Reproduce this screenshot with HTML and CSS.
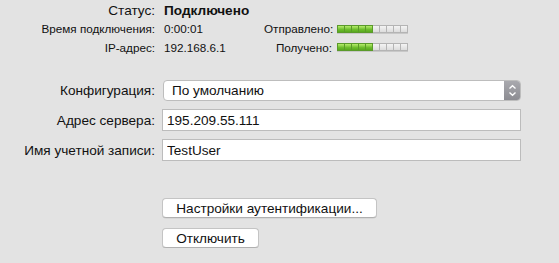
FILE: index.html
```html
<!DOCTYPE html>
<html lang="ru">
<head>
    <meta charset="UTF-8">
    <title>VPN</title>
    <link rel="stylesheet" href="styles.css">
</head>
<body>
    <div class="panel">
        <!-- Connection status -->
        <div class="status">
            <span class="label big">Статус:</span>
            <span class="value state">Подключено</span>
            <span></span>
            <span></span>

            <span class="label">Время подключения:</span>
            <span class="value">0:00:01</span>
            <span class="label">Отправлено:</span>
            <div class="meter">
                <i class="on"></i><i class="on"></i><i class="on"></i><i class="on"></i><i class="on"></i>
                <i></i><i></i><i></i><i></i><i></i>
            </div>

            <span class="label">IP-адрес:</span>
            <span class="value">192.168.6.1</span>
            <span class="label">Получено:</span>
            <div class="meter">
                <i class="on"></i><i class="on"></i><i class="on"></i><i class="on"></i><i class="on"></i>
                <i></i><i></i><i></i><i></i><i></i>
            </div>
        </div>

        <!-- Settings -->
        <form class="settings">
            <label for="config">Конфигурация:</label>
            <div class="select">
                <span>По умолчанию</span>
                <span class="stepper">
                    <svg width="9" height="13" viewBox="0 0 9 13">
                        <path d="M1.5 4.5 L4.5 1.8 L7.5 4.5 M1.5 8.5 L4.5 11.2 L7.5 8.5" fill="none" stroke="#fff" stroke-width="1.4"/>
                    </svg>
                </span>
            </div>

            <label for="server">Адрес сервера:</label>
            <input type="text" id="server" value="195.209.55.111">

            <label for="account">Имя учетной записи:</label>
            <input type="text" id="account" value="TestUser">
        </form>

        <div class="actions">
            <button type="button" class="wide">Настройки аутентификации...</button>
            <button type="button" class="narrow">Отключить</button>
        </div>
    </div>
</body>
</html>
```

FILE: styles.css
```css
body {
    margin: 0;
    background-color: #e3e3e3;
    font-family: "Liberation Sans", Arial, sans-serif;
    font-size: 13.6px;
    color: #111;
}

.panel {
    padding-top: 1px;
    width: 521px;
}

.status {
    display: grid;
    grid-template-columns: 155px 109px 68px auto;
    grid-template-rows: 18px 19px 18px;
    align-items: center;
    font-size: 11.7px;
}

.status .label {
    text-align: right;
    white-space: nowrap;
}

.status .big {
    font-size: 13.6px;
}

.status .value {
    padding-left: 9px;
}

.status .state {
    font-size: 13.6px;
    font-weight: bold;
}

.meter {
    display: flex;
    margin-left: 5px;
    height: 8px;
}

.meter i {
    width: 6px;
    height: 6px;
    border: 1px solid #b4b4b4;
    border-left: none;
    background: linear-gradient(#f4f4f4, #dcdcdc);
    box-shadow: 0 1px 0 #c8c8c8;
}

.meter i:first-child {
    border-left: 1px solid #b4b4b4;
}

.meter i.on {
    border-color: #5a9a2a;
    background: linear-gradient(#b6ec6c, #6cbc2c 60%, #58a81e);
}

.settings {
    display: grid;
    grid-template-columns: 155px 1fr;
    column-gap: 7px;
    row-gap: 8px;
    align-items: center;
    margin-top: 24px;
}

.settings label {
    text-align: right;
    white-space: nowrap;
}

.select {
    display: flex;
    align-items: center;
    height: 19px;
    border: 1px solid #bdbdbd;
    border-radius: 4px;
    background: #fff;
    margin-left: 1px;
    overflow: hidden;
}

.select span:first-child {
    flex: 1;
    padding-left: 8px;
}

.stepper {
    width: 16px;
    height: 100%;
    display: flex;
    align-items: center;
    justify-content: center;
    background: linear-gradient(#a9a9ae, #8c8c92);
}

input[type="text"] {
    box-sizing: border-box;
    height: 22px;
    border: 1px solid #bcbcbc;
    padding: 0 4px;
    font-family: inherit;
    font-size: 13.6px;
    color: #111;
    background: #fff;
    outline: none;
}

.actions {
    margin-top: 37px;
    padding-left: 162px;
    display: flex;
    flex-direction: column;
    align-items: flex-start;
    gap: 10px;
}

button {
    height: 20px;
    padding: 0;
    font-family: inherit;
    font-size: 13.6px;
    color: #111;
    background: #fff;
    border: 1px solid #c4c4c4;
    border-bottom-color: #b0b0b0;
    border-radius: 4px;
    box-shadow: 0 0.5px 0 rgba(0, 0, 0, 0.1);
}

button.wide {
    width: 215px;
}

button.narrow {
    width: 97px;
}
```
